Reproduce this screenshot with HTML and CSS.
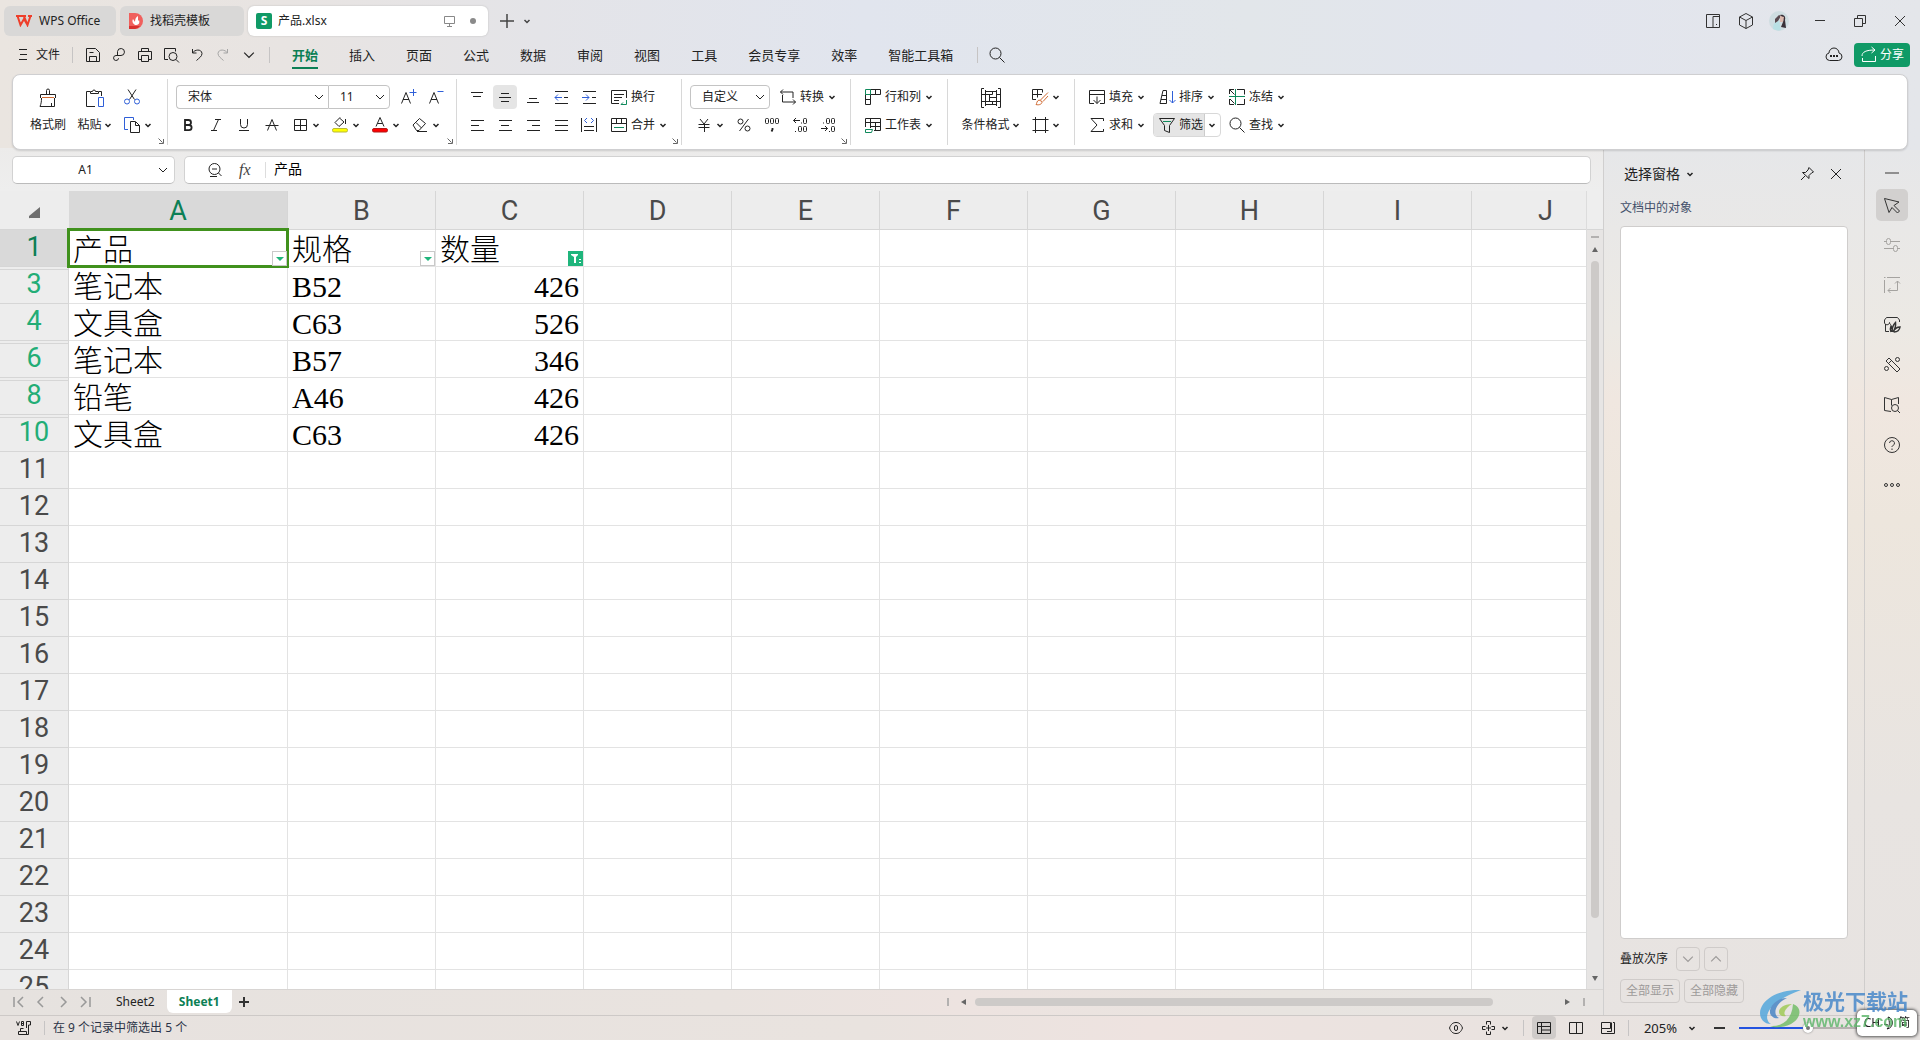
FILE: index.html
```html
<!DOCTYPE html>
<html lang="zh-CN">
<head>
<meta charset="utf-8">
<title>产品.xlsx - WPS Office</title>
<link rel="stylesheet" href="styles.css">
</head>
<body>
<svg class="sprite" aria-hidden="true">
  <symbol id="chev" viewBox="0 0 10 10"><path d="M2.500 4l2.500 2.500L7.500 4" stroke-width="1.500"/></symbol>
  <symbol id="chev-l" viewBox="0 0 10 10"><path d="M1 3l4 4 4-4"/></symbol>
  <symbol id="launch" viewBox="0 0 8 8"><path d="M1.500 1.500l4 4M2 6.500h4.500V2"/></symbol>
  <symbol id="x" viewBox="0 0 12 12"><path d="M1 1l10 10M11 1L1 11"/></symbol>
  <symbol id="menu" viewBox="0 0 18 18"><path d="M5 3.500h8M6 8.500h7M5 13.500h8"/></symbol>
  <symbol id="save" viewBox="0 0 18 18"><path d="M2.500 2.500h9l4 4v9h-13zM5.500 15.500v-5h7v5M5.500 6.500h4"/></symbol>
  <symbol id="link" viewBox="0 0 18 18"><path d="M7.500 10V5.500a3.500 3.500 0 1 1 3.500 4H6a2.500 2.500 0 1 0 2.500 3V12"/></symbol>
  <symbol id="print" viewBox="0 0 18 18"><path d="M5.500 5.500v-3h7v3M5.500 13.500h-3v-8h13v8h-3M5.500 9.500h7v6h-7z"/></symbol>
  <symbol id="preview" viewBox="0 0 18 18"><path d="M6 13.500H2.500v-11h11v3"/><circle cx="11" cy="10.500" r="4"/><path d="M14 13.500l3 3"/></symbol>
  <symbol id="undo" viewBox="0 0 18 18"><path d="M4.500 3v4h4M4.500 7c2-3.500 9-4.500 9.500.500 0 3-3 4.500-5.500 7"/></symbol>
  <symbol id="redo" viewBox="0 0 18 18"><path d="M13.500 3v4h-4M13.500 7C11.500 3.500 4.500 2.500 4 7.500c0 3 3 4.500 5.500 7"/></symbol>
  <symbol id="search" viewBox="0 0 18 18"><circle cx="7.500" cy="7.500" r="5.500"/><path d="M11.500 11.500l5 5"/></symbol>
  <symbol id="brush" viewBox="0 0 20 20"><path d="M8.500 7V2.500a1.500 1.500 0 0 1 3 0V7M2.500 10V6.500h15V10M3.500 10c0 4-.5 6-1.500 8.500h14.500V10M13.500 15v3.500"/><path class="or" d="M4 9.500h12"/></symbol>
  <symbol id="paste" viewBox="0 0 20 20"><path d="M5 3.500H1.500v15H10M14 3.500h2.500V8M5.500 5.500v-2h2a1.500 1.500 0 0 1 3 0h3v2z"/><path class="bl" d="M13.500 9.500h5v9h-5z"/></symbol>
  <symbol id="cut" viewBox="0 0 18 18"><path d="M5 1.500l6.500 10M13 1.500l-6.500 10"/><g class="bl"><circle cx="4" cy="13.500" r="2.500"/><circle cx="14" cy="13.500" r="2.500"/></g></symbol>
  <symbol id="copy" viewBox="0 0 18 18"><path class="bl" d="M5 13.500H1.500v-12h9V4"/><path d="M7.500 5.500h5l4 4v7h-9zM12.500 6v3.500h4"/></symbol>
  <symbol id="fontup" viewBox="0 0 18 18"><path d="M2.500 15.500l4.500-11 4.500 11M4 11.500h6"/><path class="bl" d="M10.500 4.500h7M14.500 1v7"/></symbol>
  <symbol id="fontdn" viewBox="0 0 18 18"><path d="M2.500 15.500l4.500-11 4.500 11M4 11.500h6"/><path class="bl" d="M10.500 3.500h6"/></symbol>
  <symbol id="bold" viewBox="0 0 18 18"><path stroke-width="1.800" d="M6 4h3.500a2.400 2.400 0 0 1 0 5H6zm0 5h4a2.600 2.600 0 0 1 0 5.200H6z"/></symbol>
  <symbol id="ital" viewBox="0 0 18 18"><path d="M8 3.500h6M4 14.500h6M11.500 3.500l-5 11"/></symbol>
  <symbol id="under" viewBox="0 0 18 18"><path d="M5.500 3v5.500a3.500 3.500 0 0 0 7 0V3M4 14.500h10"/></symbol>
  <symbol id="strike" viewBox="0 0 18 18"><path d="M4.500 14.500L9 3.500l4.500 11M2.500 9.500h13"/></symbol>
  <symbol id="border" viewBox="0 0 18 18"><path d="M3.500 3.500h12v11h-12zM9.500 3.500v11M3.500 9.500h12"/></symbol>
  <symbol id="fill" viewBox="0 0 18 18"><path d="M9 1.500L4 6.500l4 4 5-4.500-4.500-4M14.500 3v5"/><rect class="hl" x="1.500" y="12.500" width="15" height="3.500" rx="1.500"/></symbol>
  <symbol id="color" viewBox="0 0 18 18"><path d="M5 10.500l4-9 4 9M6.500 7.500h5"/><rect class="red" x="1.500" y="12.500" width="15" height="3.500" rx="1.500"/></symbol>
  <symbol id="erase" viewBox="0 0 18 18"><path d="M2 9l6.500-6.500 6 5-6.500 7H5.500zM5 6.500l5.500 5.500M6 15.500h10"/></symbol>
  <symbol id="atop" viewBox="0 0 18 18"><path d="M3 4.500h12M5 8.500h8"/></symbol>
  <symbol id="amid" viewBox="0 0 18 18"><path d="M5 5.500h8M3 9.500h12M5 13.500h8"/></symbol>
  <symbol id="abot" viewBox="0 0 18 18"><path d="M5 10.500h8M3 14.500h12"/></symbol>
  <symbol id="outd" viewBox="0 0 18 18"><path d="M3 3.500h13M12 9.500h4M3 15.500h13"/><path class="bl" d="M10 9.500H3M6 6.500l-3 3 3 3"/></symbol>
  <symbol id="ind" viewBox="0 0 18 18"><path d="M3 3.500h13M12 9.500h4M3 15.500h13"/><path class="bl" d="M2 9.500h7M6 6.500l3 3-3 3"/></symbol>
  <symbol id="wrap" viewBox="0 0 18 18"><path d="M9 15.500H1.500v-13h15V10M4 6.500h10M4 9.500h8M4 12.500h5"/><path class="gr" d="M16.500 12v4.500H11M13 14.500l-2 2"/></symbol>
  <symbol id="al" viewBox="0 0 18 18"><path d="M3 4.500h13M3 9.500h8M3 14.500h13"/></symbol>
  <symbol id="ac" viewBox="0 0 18 18"><path d="M3 4.500h13M5 9.500h8M3 14.500h13"/></symbol>
  <symbol id="ar" viewBox="0 0 18 18"><path d="M3 4.500h13M8 9.500h8M3 14.500h13"/></symbol>
  <symbol id="aj" viewBox="0 0 18 18"><path d="M3 4.500h13M3 9.500h13M3 14.500h13"/></symbol>
  <symbol id="dist" viewBox="0 0 18 18"><path d="M1.500 2v14M16.500 2v14M4 10.500h10M4 14.500h10"/><path class="bl" d="M7 2L4.500 4.500 7 7M11 2l2.500 2.500L11 7"/></symbol>
  <symbol id="merge" viewBox="0 0 18 18"><path d="M1.500 2.500h15v13h-15zM1.500 7.500h15M6.500 2.500v5M11.500 2.500v5"/><path class="gr" d="M4 11.500h10"/></symbol>
  <symbol id="conv" viewBox="0 0 18 18"><path d="M4 1.500L1.500 4 4 6.500M1.500 4H14v6M14 16.500l2.500-2.500L14 11.500M16.500 14H3.500V7"/></symbol>
  <symbol id="yen" viewBox="0 0 18 18"><path d="M5 3l4 5 4-5M3.500 8.500h11M3.500 11.500h11M9.500 8v8"/></symbol>
  <symbol id="pct" viewBox="0 0 18 18"><circle cx="5.500" cy="5.500" r="2.500"/><circle cx="12.500" cy="12.500" r="2.500"/><path d="M13.500 3l-9 12"/></symbol>
  <symbol id="thou" viewBox="0 0 18 18"><rect x="2.500" y="2.500" width="3" height="5" rx="1"/><rect x="7.500" y="2.500" width="3" height="5" rx="1"/><rect x="12.500" y="2.500" width="3" height="5" rx="1"/><path stroke-width="1.800" d="M9.500 12v1.500L8.500 15.500"/></symbol>
  <symbol id="decl" viewBox="0 0 18 18"><path d="M9 4.500H2.500M5 2L2.500 4.500 5 7M10.500 6.500v1M4.500 15v1"/><rect x="12.500" y="2.500" width="3" height="5" rx="1"/><rect x="7.500" y="10.500" width="3" height="5" rx="1"/><rect x="12.500" y="10.500" width="3" height="5" rx="1"/></symbol>
  <symbol id="decr" viewBox="0 0 18 18"><path d="M2 12.500h6.500M6 10l2.500 2.500L6 15M4.500 6.500v1M10.500 15v1"/><rect x="7.500" y="2.500" width="3" height="5" rx="1"/><rect x="12.500" y="2.500" width="3" height="5" rx="1"/><rect x="12.500" y="10.500" width="3" height="5" rx="1"/></symbol>
  <symbol id="rowcol" viewBox="0 0 18 18"><path d="M6.500 6.500h10v-5h-10zM11.500 1.500v5M1.500 6.500h5v10h-5zM1.500 11.500h5"/><path class="gr" d="M1.500 1.500h5v5h-5z"/></symbol>
  <symbol id="wsheet" viewBox="0 0 18 18"><path d="M1.500 11V2.500h15v12H10M1.500 6.500h15M6.500 2.500V12M6.500 10.500h10M11.500 6.500v8"/><path class="gr" d="M1.500 13.500h7l-1 3h-6z"/></symbol>
  <symbol id="cond" viewBox="0 0 20 20"><path d="M3 .5H.5v19H3M17 .5h2.500v19H17M4.500 2v16M15.500 2v16M.5 6.500h4M.5 13.500h4M15.500 6.500h4M15.500 13.500h4M4.500 3.500h11M4.500 6.500h7v-3M8.500 6.500v7M8.500 9.500h7M4.500 13.500h11M4.500 16.500h11M11.500 13.500v3"/></symbol>
  <symbol id="tstyle" viewBox="0 0 18 18"><path d="M11 6.500H1.500M1.500 1.500h10v3M1.500 1.500v10H5M6.500 1.500v8"/><path class="or" d="M17 4.500L9.500 12M17 8l-5 5.500M5 16.500c1-1 .5-3.500 3-4.500l3 1.500c.5 2.500-3 4-6 3z"/></symbol>
  <symbol id="frame" viewBox="0 0 18 18"><path d="M4.500 1v16M14.500 1v16M1.500 3.500h16M1.500 14.500h16"/></symbol>
  <symbol id="fillin" viewBox="0 0 18 18"><path d="M6 15.500H1.500v-13h15v13H12M1.500 6.500h15M9 8.500v7M5.500 12L9 15.500l3.500-3.500"/></symbol>
  <symbol id="sort" viewBox="0 0 18 18"><path d="M2 15.500l3-13h3.500v13zM4 7.500h4.500M3 11.500h5.500"/><path class="bl" d="M14.500 3v12M11.500 12l3 3 3-3"/></symbol>
  <symbol id="freeze" viewBox="0 0 18 18"><path d="M6 1.500H1.500V6M1.500 1.500l5 5M9 1.500h7.500v5M1.500 11v5.500H6M2 11l4.500 4.500M9 16.500h7.500V11"/><path class="gr" d="M7.500 1v16M1 8.500h16"/></symbol>
  <symbol id="sum" viewBox="0 0 18 18"><path d="M15.500 5V2.500H3l6 6.500-6 6.500h12.500V13"/></symbol>
  <symbol id="funnel" viewBox="0 0 18 18"><path d="M1.500 2.500h15l-5 7v7l-5-2v-5z"/><path class="gr" d="M5 5.500h8"/></symbol>
  <symbol id="panel" viewBox="0 0 18 18"><path d="M9 15.500H2.500v-13h13v13H9v-11h6.500M12 12.500h1"/></symbol>
  <symbol id="cube" viewBox="0 0 18 18"><path d="M9 1.500L15.500 5v8L9 16.500 2.500 13V5zM2.500 5L9 8.500 15.500 5M9 8.500v8"/></symbol>
  <symbol id="restore" viewBox="0 0 18 18"><path d="M3.500 6.500h8v8h-8zM6.500 6.500v-3h8v8h-3"/></symbol>
  <symbol id="cloud" viewBox="0 0 18 18"><path d="M4.500 14.500a3.800 3.800 0 0 1-.5-7.500 5 5 0 0 1 10 0 3.800 3.800 0 0 1-.5 7.500z"/><path stroke-width="2" d="M5 10h2M8 10h2M11 10h2"/></symbol>
  <symbol id="share" viewBox="0 0 18 18"><path d="M2 10c0-4 4-6 13-6M11.500 1L15 4l-3.500 3M2.500 12v3.500h13V10"/></symbol>
  <symbol id="screen" viewBox="0 0 14 14"><path d="M2.500 2.500h10v7h-10zM5 12.500h5M7.500 10v2"/></symbol>
  <symbol id="plus" viewBox="0 0 14 14"><path stroke-width="1.500" d="M0 7h14M7 0v14"/></symbol>
  <symbol id="zoomout" viewBox="0 0 18 18"><circle cx="8.500" cy="8" r="5.500"/><path d="M6 8h5M12.500 12l3 3M4 15.500h7"/></symbol>
  <symbol id="pin" viewBox="0 0 18 18"><path d="M11 2.500l4.500 4.500-2 1-2.500 2.500v3L4.500 7.500h3L10 5zM7 11l-4 4"/></symbol>
  <symbol id="cursor" viewBox="0 0 18 18"><path d="M1.500 2.500l14.500 3.500-5 3.500 5.500 5.500-2 2L9 11.500l-3 5z"/></symbol>
  <symbol id="adjust" viewBox="0 0 18 18"><path d="M1 5.500h2.500M8 5.500h9M1 12.500h9M15 12.500h2"/><rect x="3.500" y="2.500" width="4" height="6" rx="2"/><rect x="10.500" y="9.500" width="4" height="6" rx="2"/></symbol>
  <symbol id="trans" viewBox="0 0 18 18"><path d="M4 1.500h13M1.500 4v13M1 1.500h1.500M14.500 5v9.500H5M12 7.500L14.500 5 17 7.500M7.500 12L5 14.500 7.500 17"/></symbol>
  <symbol id="store" viewBox="0 0 18 18"><path d="M2.500 8v7.500H6M1.500 7V4l2-2.500h11l2 2.500v2M1.500 6.500c0 3 5 3 5 0 0 1 .5 2 1.500 2"/><path stroke-width="1.500" d="M8 16c-1-3-1-4 0-6 2 3 1 4 1 6 0-4 1-7 3.500-9.500.5 4-.5 7-2.500 9.500 2-4 4-5 7-5-.5 3-2.500 5-6 5"/></symbol>
  <symbol id="tools" viewBox="0 0 18 18"><path d="M3 5l3-3 11 11-3 3zM8.500 4.500l-3 3"/><circle cx="14.500" cy="3.500" r="2"/><circle cx="3.500" cy="12.500" r="2"/></symbol>
  <symbol id="book" viewBox="0 0 18 18"><path d="M8 15.500l-6.500-1v-13l7 2 7-2V8M8.500 3.500v6"/><circle cx="12" cy="12" r="3.500"/><path d="M14.500 14.500l2.500 2.500"/></symbol>
  <symbol id="help" viewBox="0 0 18 18"><circle cx="9" cy="9" r="7.500"/><path d="M6.500 7a2.500 2.500 0 1 1 3.500 2.500c-1 .5-1 1-1 1.500M9 12.500v1.500"/></symbol>
  <symbol id="more" viewBox="0 0 18 18"><circle cx="3" cy="9" r="1.500"/><circle cx="9" cy="9" r="1.500"/><circle cx="15" cy="9" r="1.500"/></symbol>
  <symbol id="macro" viewBox="0 0 18 18"><path d="M1.500 2.500l1.500 4 1.500-4M6.500 2.500h2v4h-2zM6.500 4.500h2M11.500 9V2.500h4V6h-2v9.500h-10v-3h8v3M5.500 12.500v-3h3"/></symbol>
  <symbol id="eye" viewBox="0 0 18 18"><path d="M2.500 9C4 5 6 3.500 9 3.500S14 5 15.500 9C14 13 12 14.500 9 14.500S4 13 2.500 9z"/><rect x="7.500" y="6.500" width="3" height="5" rx="1.500"/></symbol>
  <symbol id="focus" viewBox="0 0 18 18"><path d="M6.500 5.500v-3h4v3M6.500 12.500v3h4v-3M5.500 7.500h-3v3h3M11.500 7.500h3v3h-3M8.500 6v6M6 9h5"/></symbol>
  <symbol id="vgrid" viewBox="0 0 18 18"><path d="M2.500 3.500h13v11h-13zM2.500 7.500h13M6.500 3.500v11M6.500 11h9"/></symbol>
  <symbol id="vsplit" viewBox="0 0 18 18"><path d="M2.500 3.500h13v11h-13zM9.500 3.500v11"/></symbol>
  <symbol id="vread" viewBox="0 0 18 18"><path d="M2.500 3.500h9v6h-9zM2.500 9.500v5h13v-11M14 3.500h1.500M8 12.500h4.500v-9"/></symbol>
</svg>

<header class="titlebar">
  <nav class="doctabs" aria-label="文档标签">
    <button class="doctab home"><svg width="16" height="12" viewBox="0 0 16 12"><path fill="none" stroke="#ee3f2b" stroke-width="2" d="M0 1h10M14.500 1l-3 9L8 1.500M1.500 1l3 9L8 4l3.500 6M12 1h4"/></svg>WPS Office</button>
    <button class="doctab store"><svg width="14" height="16" viewBox="0 0 14 16"><path fill="#f0605d" d="M0 0h6a8 8 0 0 1 0 16H0z"/><path fill="#d8312f" d="M0 13h11a8 8 0 0 1-5 3H0z"/><path fill="#fff" d="M6 12C3 10 3 8 4 6l2 3c0-3 1-5 3-6v5l1-1c1 3 0 5-4 5z"/></svg>找稻壳模板</button>
    <button class="doctab active"><span class="s-logo">S</span><span class="name">产品.xlsx</span><svg class="ic14 dim"><use href="#screen"/></svg><i class="dot"></i></button>
  </nav>
  <button class="ghost" aria-label="新建"><svg class="ic14"><use href="#plus"/></svg></button>
  <button class="ghost narrow" aria-label="标签列表"><svg class="ch"><use href="#chev"/></svg></button>
  <div class="winctl">
    <button aria-label="侧栏"><svg class="ic"><use href="#panel"/></svg></button>
    <button aria-label="应用"><svg class="ic"><use href="#cube"/></svg></button>
    <button class="user" aria-label="账户"><svg width="20" height="20" viewBox="0 0 20 20"><circle cx="10" cy="10" r="10" fill="#cfdde1"/><path fill="#b9e0e4" d="M4 18c0-5 2-8 6-8l2 9c-3 1-6 0-8-1z"/><path fill="#5b4a50" d="M6 8l4-4 2 1-3 5-3 2z"/><path fill="#3a3038" d="M11 4c4-1 6 2 5 5l1 8-5-1 2-5c1-3 0-4-3-7z"/><path fill="#dcb9ae" d="M11 5l4 1-1 5-3 0z"/></svg></button>
    <button class="sys" aria-label="最小化"><svg class="ic"><path d="M4 8.500h10"/></svg></button>
    <button class="sys" aria-label="还原"><svg class="ic"><use href="#restore"/></svg></button>
    <button class="sys" aria-label="关闭"><svg class="ic12"><use href="#x"/></svg></button>
  </div>
</header>

<nav class="menubar">
  <button class="file"><svg class="ic"><use href="#menu"/></svg>文件</button>
  <i class="vsep"></i>
  <div class="quick">
    <button aria-label="保存"><svg class="ic"><use href="#save"/></svg></button>
    <button aria-label="输出"><svg class="ic"><use href="#link"/></svg></button>
    <button aria-label="打印"><svg class="ic"><use href="#print"/></svg></button>
    <button aria-label="打印预览"><svg class="ic"><use href="#preview"/></svg></button>
    <button aria-label="撤销"><svg class="ic"><use href="#undo"/></svg></button>
    <button aria-label="恢复" class="faint"><svg class="ic"><use href="#redo"/></svg></button>
    <button aria-label="更多"><svg class="ch12"><use href="#chev-l"/></svg></button>
  </div>
  <i class="vsep"></i>
  <div class="menus">
    <a class="on" href="#start">开始</a><a href="#insert">插入</a><a href="#page">页面</a><a href="#formula">公式</a><a href="#data">数据</a><a href="#review">审阅</a><a href="#view">视图</a><a href="#tool">工具</a><a href="#vip">会员专享</a><a href="#eff">效率</a><a href="#smart">智能工具箱</a>
  </div>
  <i class="vsep"></i>
  <button class="find" aria-label="搜索"><svg class="ic"><use href="#search"/></svg></button>
  <div class="right">
    <button aria-label="云同步"><svg class="ic"><use href="#cloud"/></svg></button>
    <button class="sharebtn"><svg class="ic"><use href="#share"/></svg>分享</button>
  </div>
</nav>

<section class="ribbon" aria-label="开始">
  <div class="group clip">
    <button class="big"><svg class="ic20"><use href="#brush"/></svg><span>格式刷</span></button>
    <button class="big paste"><svg class="ic20"><use href="#paste"/></svg><span>粘贴<svg class="ch"><use href="#chev"/></svg></span></button>
    <div class="rows">
      <div class="row"><button class="split flat" aria-label="剪切"><svg class="ic"><use href="#cut"/></svg></button></div>
      <div class="row"><button class="split flat" aria-label="复制"><svg class="ic"><use href="#copy"/></svg><svg class="ch"><use href="#chev"/></svg></button></div>
    </div>
    <svg class="launch"><use href="#launch"/></svg>
  </div>
  <div class="group font">
    <div class="rows">
      <div class="row selrow">
        <span class="sel name"><select aria-label="字体"><option>宋体</option></select><svg class="ch"><use href="#chev-l"/></svg></span>
        <span class="sel size"><select aria-label="字号"><option>11</option></select><svg class="ch"><use href="#chev-l"/></svg></span>
        <button class="tb" aria-label="增大字号"><svg class="ic"><use href="#fontup"/></svg></button>
        <button class="tb" aria-label="减小字号"><svg class="ic"><use href="#fontdn"/></svg></button>
      </div>
      <div class="row">
        <button class="tb" aria-label="加粗"><svg class="ic"><use href="#bold"/></svg></button>
        <button class="tb" aria-label="倾斜"><svg class="ic"><use href="#ital"/></svg></button>
        <button class="tb" aria-label="下划线"><svg class="ic"><use href="#under"/></svg></button>
        <button class="tb" aria-label="删除线"><svg class="ic"><use href="#strike"/></svg></button>
        <button class="split" aria-label="边框"><svg class="ic"><use href="#border"/></svg><svg class="ch"><use href="#chev"/></svg></button>
        <button class="split" aria-label="填充颜色"><svg class="ic"><use href="#fill"/></svg><svg class="ch"><use href="#chev"/></svg></button>
        <button class="split" aria-label="字体颜色"><svg class="ic"><use href="#color"/></svg><svg class="ch"><use href="#chev"/></svg></button>
        <button class="split" aria-label="清除"><svg class="ic"><use href="#erase"/></svg><svg class="ch"><use href="#chev"/></svg></button>
      </div>
    </div>
    <svg class="launch"><use href="#launch"/></svg>
  </div>
  <div class="group align">
    <div class="rows">
      <div class="row">
        <button class="tb" aria-label="顶端对齐"><svg class="ic"><use href="#atop"/></svg></button>
        <button class="tb pressed" aria-label="垂直居中"><svg class="ic"><use href="#amid"/></svg></button>
        <button class="tb" aria-label="底端对齐"><svg class="ic"><use href="#abot"/></svg></button>
        <button class="tb" aria-label="减少缩进"><svg class="ic"><use href="#outd"/></svg></button>
        <button class="tb" aria-label="增加缩进"><svg class="ic"><use href="#ind"/></svg></button>
        <button class="lab"><svg class="ic"><use href="#wrap"/></svg>换行</button>
      </div>
      <div class="row">
        <button class="tb" aria-label="左对齐"><svg class="ic"><use href="#al"/></svg></button>
        <button class="tb" aria-label="居中"><svg class="ic"><use href="#ac"/></svg></button>
        <button class="tb" aria-label="右对齐"><svg class="ic"><use href="#ar"/></svg></button>
        <button class="tb" aria-label="两端对齐"><svg class="ic"><use href="#aj"/></svg></button>
        <button class="tb" aria-label="分散对齐"><svg class="ic"><use href="#dist"/></svg></button>
        <button class="lab"><svg class="ic"><use href="#merge"/></svg>合并<svg class="ch"><use href="#chev"/></svg></button>
      </div>
    </div>
    <svg class="launch"><use href="#launch"/></svg>
  </div>
  <div class="group number">
    <div class="rows">
      <div class="row selrow2">
        <span class="sel fmt"><select aria-label="数字格式"><option>自定义</option></select><svg class="ch"><use href="#chev-l"/></svg></span>
        <button class="lab"><svg class="ic"><use href="#conv"/></svg>转换<svg class="ch"><use href="#chev"/></svg></button>
      </div>
      <div class="row">
        <button class="split" aria-label="货币"><svg class="ic"><use href="#yen"/></svg><svg class="ch"><use href="#chev"/></svg></button>
        <button class="tb" aria-label="百分比"><svg class="ic"><use href="#pct"/></svg></button>
        <button class="tb" aria-label="千位分隔"><svg class="ic"><use href="#thou"/></svg></button>
        <button class="tb" aria-label="增加小数位"><svg class="ic"><use href="#decl"/></svg></button>
        <button class="tb" aria-label="减少小数位"><svg class="ic"><use href="#decr"/></svg></button>
      </div>
    </div>
    <svg class="launch"><use href="#launch"/></svg>
  </div>
  <div class="group cells">
    <div class="rows">
      <div class="row"><button class="lab"><svg class="ic"><use href="#rowcol"/></svg>行和列<svg class="ch"><use href="#chev"/></svg></button></div>
      <div class="row"><button class="lab"><svg class="ic"><use href="#wsheet"/></svg>工作表<svg class="ch"><use href="#chev"/></svg></button></div>
    </div>
  </div>
  <div class="group style">
    <button class="big cond"><svg class="ic20"><use href="#cond"/></svg><span>条件格式<svg class="ch"><use href="#chev"/></svg></span></button>
    <div class="rows">
      <div class="row"><button class="split" aria-label="表格样式"><svg class="ic"><use href="#tstyle"/></svg><svg class="ch"><use href="#chev"/></svg></button></div>
      <div class="row"><button class="split" aria-label="单元格样式"><svg class="ic"><use href="#frame"/></svg><svg class="ch"><use href="#chev"/></svg></button></div>
    </div>
  </div>
  <div class="group edit">
    <button class="lab"><svg class="ic"><use href="#fillin"/></svg>填充<svg class="ch"><use href="#chev"/></svg></button>
    <button class="lab"><svg class="ic"><use href="#sort"/></svg>排序<svg class="ch"><use href="#chev"/></svg></button>
    <button class="lab"><svg class="ic"><use href="#freeze"/></svg>冻结<svg class="ch"><use href="#chev"/></svg></button>
    <button class="lab"><svg class="ic"><use href="#sum"/></svg>求和<svg class="ch"><use href="#chev"/></svg></button>
    <button class="lab filter"><span><svg class="ic"><use href="#funnel"/></svg>筛选</span><svg class="ch"><use href="#chev"/></svg></button>
    <button class="lab"><svg class="ic"><use href="#search"/></svg>查找<svg class="ch"><use href="#chev"/></svg></button>
  </div>
</section>

<main class="workspace">
  <section class="book">
    <div class="formula">
      <div class="namebox"><input aria-label="名称框" value="A1"><svg class="ch"><use href="#chev-l"/></svg></div>
      <div class="fx"><svg class="ic"><use href="#zoomout"/></svg><span class="fxi"><i>f</i><b>x</b></span><input aria-label="编辑栏" value="产品"></div>
    </div>
    <div class="sheet">
      <div class="cells-view">
        <table>
          <colgroup><col class="c-h"><col class="c-a"><col span="9" class="c-n"></colgroup>
          <thead><tr><th class="corner"><svg width="12" height="13"><path d="M11 1v11H1a1 1 0 0 1-1-2z"/></svg><th class="sel-h">A<th>B<th>C<th>D<th>E<th>F<th>G<th>H<th>I<th>J</tr></thead>
          <tbody>
          <tr class="hid"><th class="sel-h">1<td class="cur">产品<i class="fb"></i><td>规格<i class="fb"></i><td>数量<i class="fb on"><svg viewBox="0 0 15 15"><path d="M3 3h7v1L8 6v6H6V6L3 4zM11 8h2v1h-2zM11 11h2v1h-2z"/></svg></i><td><td><td><td><td><td><td></tr>
          <tr><th class="flt">3<td>笔记本<td>B52<td class="n">426<td><td><td><td><td><td><td></tr>
          <tr class="hid"><th class="flt">4<td>文具盒<td>C63<td class="n">526<td><td><td><td><td><td><td></tr>
          <tr class="hid"><th class="flt">6<td>笔记本<td>B57<td class="n">346<td><td><td><td><td><td><td></tr>
          <tr class="hid"><th class="flt">8<td>铅笔<td>A46<td class="n">426<td><td><td><td><td><td><td></tr>
          <tr><th class="flt">10<td>文具盒<td>C63<td class="n">426<td><td><td><td><td><td><td></tr>
          <tr><th>11<td><td><td><td><td><td><td><td><td><td></tr>
          <tr><th>12<td><td><td><td><td><td><td><td><td><td></tr>
          <tr><th>13<td><td><td><td><td><td><td><td><td><td></tr>
          <tr><th>14<td><td><td><td><td><td><td><td><td><td></tr>
          <tr><th>15<td><td><td><td><td><td><td><td><td><td></tr>
          <tr><th>16<td><td><td><td><td><td><td><td><td><td></tr>
          <tr><th>17<td><td><td><td><td><td><td><td><td><td></tr>
          <tr><th>18<td><td><td><td><td><td><td><td><td><td></tr>
          <tr><th>19<td><td><td><td><td><td><td><td><td><td></tr>
          <tr><th>20<td><td><td><td><td><td><td><td><td><td></tr>
          <tr><th>21<td><td><td><td><td><td><td><td><td><td></tr>
          <tr><th>22<td><td><td><td><td><td><td><td><td><td></tr>
          <tr><th>23<td><td><td><td><td><td><td><td><td><td></tr>
          <tr><th>24<td><td><td><td><td><td><td><td><td><td></tr>
          <tr><th>25<td><td><td><td><td><td><td><td><td><td></tr>
          </tbody>
        </table>
      </div>
      <div class="vbar"><div class="vhead"></div><i class="tick"></i><i class="up"></i><i class="thumb"></i><i class="down"></i></div>
    </div>
    <div class="tabsbar">
      <div class="nav">
        <svg class="ic14"><path d="M2 2v10M11 2L6 7l5 5"/></svg><svg class="ic14"><path d="M9 2L4 7l5 5"/></svg><svg class="ic14"><path d="M5 2l5 5-5 5"/></svg><svg class="ic14"><path d="M12 2v10M3 2l5 5-5 5"/></svg>
      </div>
      <button class="stab">Sheet2</button><button class="stab on">Sheet1</button>
      <button class="add" aria-label="新建工作表"><svg width="10" height="10"><path d="M0 5h10M5 0v10"/></svg></button>
      <div class="hbar"><i class="tick"></i><i class="left"></i><span class="track"><i class="thumb"></i></span><i class="rt"></i><i class="tick"></i></div>
    </div>
  </section>

  <aside class="pane">
    <div class="phead"><h2>选择窗格</h2><svg class="ch"><use href="#chev"/></svg><button class="pinb" aria-label="固定"><svg class="ic"><use href="#pin"/></svg></button><button aria-label="关闭窗格"><svg class="ic12"><use href="#x"/></svg></button></div>
    <p class="plabel">文档中的对象</p>
    <div class="plist"></div>
    <div class="order"><span>叠放次序</span><button disabled aria-label="下移"><svg class="ch12"><use href="#chev-l"/></svg></button><button disabled aria-label="上移"><svg class="ch12 flip"><use href="#chev-l"/></svg></button></div>
    <div class="showall"><button disabled>全部显示</button><button disabled>全部隐藏</button></div>
  </aside>

  <nav class="side" aria-label="侧边栏">
    <i class="bar"></i>
    <button class="on" aria-label="选择"><svg class="ic"><use href="#cursor"/></svg></button>
    <button class="faint" aria-label="属性"><svg class="ic"><use href="#adjust"/></svg></button>
    <button class="faint" aria-label="转换"><svg class="ic"><use href="#trans"/></svg></button>
    <button aria-label="稻壳"><svg class="ic"><use href="#store"/></svg></button>
    <button aria-label="工具"><svg class="ic"><use href="#tools"/></svg></button>
    <button aria-label="学习"><svg class="ic"><use href="#book"/></svg></button>
    <button aria-label="帮助"><svg class="ic"><use href="#help"/></svg></button>
    <button aria-label="更多"><svg class="ic"><use href="#more"/></svg></button>
  </nav>
</main>

<footer class="status">
  <svg class="ic"><use href="#macro"/></svg><i class="vsep"></i><span class="msg">在 9 个记录中筛选出 5 个</span>
  <div class="views">
    <button aria-label="护眼"><svg class="ic"><use href="#eye"/></svg></button>
    <button class="wide" aria-label="聚光灯"><svg class="ic"><use href="#focus"/></svg><svg class="ch"><use href="#chev"/></svg></button>
    <i class="vsep"></i>
    <button class="on" aria-label="普通视图"><svg class="ic"><use href="#vgrid"/></svg></button>
    <button aria-label="分页预览"><svg class="ic"><use href="#vsplit"/></svg></button>
    <button aria-label="阅读"><svg class="ic"><use href="#vread"/></svg></button>
    <i class="vsep"></i>
    <button class="pct">205%<svg class="ch"><use href="#chev"/></svg></button>
    <button class="minus" aria-label="缩小"><i></i></button>
    <input type="range" min="0" max="100" value="49" aria-label="缩放">
  </div>
</footer>

<div class="ime">CH <svg width="12" height="14"><path d="M5 1c6 1 6 11-1 12 3-3 3-7 1-12zM1 8l4 1"/></svg> 简</div>
<div class="mark">
  <svg width="44" height="40" viewBox="0 0 44 40"><path fill="#4aa3dc" d="M42 1C20 0 2 10 1 24c0 6 4 11 11 11C4 30 6 14 42 1z"/><path fill="#3f7fc4" d="M28 9c-10 0-18 8-17 15 1 4 5 6 9 5-6-3-5-14 8-20z"/><path fill="#6dbb62" d="M34 15c9 3 9 14-2 20-8 4-16 4-21 2 12 1 22-6 23-22z"/><path fill="#9cc94e" d="M33 15c-8 0-13 4-13 8 0 3 3 5 7 4-3-2-2-7 6-12z"/></svg>
  <div><strong>极光下载站</strong><span>www.xz7.com</span></div>
</div>
</body>
</html>
```

FILE: styles.css
```css
* { box-sizing: border-box; }
body {
  margin: 0;
  height: 100vh;
  display: flex;
  flex-direction: column;
  overflow: hidden;
  font: 12px/16px "Noto Sans", "Noto Sans CJK SC", sans-serif;
  color: #222;
  background:
    linear-gradient(90deg, #eae5e0 0, #e8e4e2 15%, #e4e4e8 28%, #e1e5ee 45%, #e2e6ea 65%, #e2e5ee 80%, #e4e6ea 100%) top / 100% 150px no-repeat,
    linear-gradient(180deg, #e6e7e9 150px, #e9e8e7 230px, #ece9e4 330px, #f0e7e0 400px, #ede6dd 520px, #e8e4e1 800px, #e7e3e1 100%);
}
button, input, select { font: inherit; color: inherit; margin: 0; padding: 0; border: 0; background: none; }
button { display: flex; align-items: center; justify-content: center; white-space: nowrap; }
a { color: inherit; text-decoration: none; }
svg { flex: none; display: block; }
.sprite { position: absolute; width: 0; height: 0; }
.ic, .ic12, .ic14, .ic20, .ch, .ch12, .launch { fill: none; stroke: currentColor; stroke-width: 1; }
.ic { width: 18px; height: 18px; }
.ic20 { width: 20px; height: 20px; }
.ic14 { width: 14px; height: 14px; }
.ic12 { width: 12px; height: 12px; }
.ch { width: 10px; height: 10px; }
.ch12 { width: 12px; height: 12px; }
.flip { transform: scaleY(-1); }
.bl { stroke: #2f5fd8; }
.gr { stroke: #108a5c; }
.or { stroke: #d06a32; }
.hl { fill: #ffff00; stroke: #b9b93a; }
.red { fill: #f00; stroke: #b01818; }
.faint { color: #a5a5a5; }
.dim { color: #888; }
.vsep { width: 1px; height: 16px; background: #c6c4c4; flex: none; }

/* title bar */
.titlebar { height: 40px; display: flex; align-items: center; padding: 2px 0 0 4px; }
.doctabs { display: flex; gap: 4px; }
.doctab { height: 30px; border-radius: 6px; background: #d9d8d7; justify-content: flex-start; padding: 0 12px; gap: 7px; }
.doctab.home { width: 112px; }
.doctab.store { width: 124px; padding: 0 9px; }
.doctab.active { width: 240px; background: #fff; padding: 0 12px 0 8px; gap: 6px; box-shadow: 0 0 2px #bbb; }
.doctab .name { flex: 1; text-align: left; }
.doctab .dim { margin-right: 8px; }
.s-logo { width: 16px; height: 16px; border-radius: 2px; background: #109a66; color: #fff; font-weight: 700; text-align: center; }
.dot { width: 6px; height: 6px; border-radius: 50%; background: #8a8a8a; }
.ghost { width: 38px; height: 30px; color: #444; }
.ghost.narrow { width: 10px; margin-left: -4px; }
.winctl { margin-left: auto; display: flex; align-items: center; color: #333; }
.winctl button { width: 33px; height: 30px; }
.winctl .user { margin-right: 5px; }
.winctl .sys { width: 40px; }

/* menu bar */
.menubar { height: 34px; display: flex; align-items: center; padding: 0 10px 4px 14px; }
.menubar .file { gap: 4px; margin-right: 12px; }
.quick { display: flex; margin: 0 7px; }
.quick button { width: 26px; height: 24px; }
.menus { display: flex; gap: 31px; margin: 0 24px 0 22px; font-size: 13px; line-height: 20px; }
.menus a { padding: 3px 0 2px; border-bottom: 2px solid transparent; white-space: nowrap; }
.menus .on { color: #0c7f55; font-weight: 700; border-color: #0c7f55; }
.find { margin-left: 10px; }
.right { margin-left: auto; display: flex; align-items: center; gap: 11px; }
.sharebtn { height: 24px; padding: 0 6px; gap: 2px; border-radius: 4px; background: #109a66; color: #fff; }

/* ribbon */
.ribbon { position: relative; z-index: 1; flex: none; display: flex; margin: 0 12px; padding: 4px 0; height: 76px; background: #fff; border: 1px solid #cfcfd1; border-radius: 8px; box-shadow: 0 1px 2px #0002; }
.group { position: relative; display: flex; padding-top: 4px; border-right: 1px solid #d8d8d8; height: 66px; }
.group:last-child { border: 0; }
.rows { display: flex; flex-direction: column; }
.row { display: flex; align-items: center; height: 28px; }
.launch { position: absolute; right: 2px; bottom: 0; width: 8px; height: 8px; color: #666; }
.tb { width: 28px; height: 24px; }
.pressed { background: #e5e5e5; border-radius: 4px; width: 24px; margin: 0 2px; }
.split { width: 40px; height: 24px; padding-left: 5px; gap: 2px; justify-content: flex-start; }
.lab { height: 24px; padding-left: 7px; gap: 3px; justify-content: flex-start; }
.big { flex-direction: column; justify-content: flex-start; gap: 9px; width: 48px; height: 56px; padding-top: 5px; }
.big span { display: flex; align-items: center; gap: 1px; }
.big.paste { width: 46px; }
.big.cond { width: 60px; margin-right: 5px; }
.clip { padding-left: 11px; padding-right: 9px; }
.font { padding-left: 6px; padding-right: 6px; }
.align { padding-left: 6px; padding-right: 13px; }
.number { padding-left: 8px; padding-right: 8px; }
.cells { padding-left: 6px; padding-right: 13px; }
.style { padding-left: 13px; padding-right: 8px; }
.edit { padding-left: 6px; display: grid; grid-template-columns: repeat(3, 70px); grid-template-rows: 28px 28px; align-items: center; }
.filter { width: 68px; margin-left: 2px; padding: 0; border: 1px solid #d8d8d8; border-radius: 4px; gap: 2px; overflow: hidden; }
.filter span { display: flex; align-items: center; gap: 3px; height: 22px; padding: 0 1px 0 4px; background: #e5e5e5; border-right: 1px solid #ccc; }
.sel { display: grid; align-items: center; height: 24px; border: 1px solid #c4c4c4; border-radius: 4px; }
.sel > * { grid-area: 1 / 1; }
.sel .ch { justify-self: end; margin-right: 4px; pointer-events: none; }
.sel select { appearance: none; width: 100%; height: 22px; padding-left: 11px; }
.sel.name { width: 152px; border-radius: 4px 0 0 4px; border-right: 0; }
.sel.size { width: 62px; border-radius: 0 4px 4px 0; margin-right: 4px; }
.sel.fmt { width: 80px; }
.selrow { padding-left: 2px; }
.selrow2 { gap: 2px; }

/* workspace */
.workspace { flex: 1; min-height: 0; display: grid; grid-template-columns: minmax(0, 1fr) 261px 56px; grid-template-rows: minmax(0, 1fr); margin-top: -2px; }
.book { display: flex; flex-direction: column; min-height: 0; }
.formula { display: flex; gap: 9px; padding: 8px 12px 7px 12px; background: linear-gradient(#ecebea, #eee); }
.namebox, .fx { height: 28px; background: #fff; border: 1px solid #d2d2d2; border-bottom-color: #bbb; border-radius: 5px; display: flex; align-items: center; }
.namebox { width: 163px; padding-right: 6px; }
.namebox input { flex: 1; min-width: 0; text-align: center; }
.fx { flex: 1; padding-left: 21px; }
.fxi { width: 42px; padding-left: 15px; margin-right: 8px; border-right: 1px solid #ddd; font: 16px/16px "Liberation Serif", serif; color: #444; }
.fxi b { font: italic 16px/14px "Liberation Serif", serif; }
.fx input { flex: 1; font-size: 14px; color: #000; height: 24px; padding-bottom: 4px; }
.sheet { flex: 1; min-height: 0; display: flex; }
.cells-view { flex: 1; min-width: 0; overflow: hidden; background: #fff; border-right: 1px solid #dcdcdc; }
table { table-layout: fixed; width: 1620px; border-spacing: 0; }
.c-h { width: 69px; }
.c-a { width: 219px; }
.c-n { width: 148px; }
th, td { height: 37px; padding: 0; border-right: 1px solid #e3e3e3; border-bottom: 1px solid #e3e3e3; white-space: nowrap; }
th { background: #ededed; font: 27px/36px Roboto, sans-serif; color: #4a4a4a; }
thead th { height: 39px; border-color: #d6d6d6; padding-top: 2px; }
tbody th { border-right-color: #d6d6d6; border-bottom-color: #d6d6d6; line-height: 34px; padding-bottom: 2px; }
.hid + tr th { background: linear-gradient(#ededed 2px, #d6d6d6 2px, #d6d6d6 3px, #ededed 3px); }
thead .corner { border-right-color: #ededed; }
.corner svg { margin: 2px 0 0 29px; fill: #6f6f6f; }
thead .sel-h, tbody .sel-h { background: #d9d9d9; color: #0c7f55; }
.flt { color: #22ad76; }
td { position: relative; padding: 4px 4px 0 4px; font: 300 30px/32px "Liberation Serif", "Noto Sans CJK SC", serif; color: #000; }
td.n { text-align: right; }
.cur::after { content: ""; position: absolute; z-index: 1; inset: -2px; border: 3px solid #40911d; pointer-events: none; }
.fb { position: absolute; z-index: 2; right: 0; bottom: 0; width: 15px; height: 15px; background: #fff; border: 1px solid #c9c9c9; }
.fb::before { content: ""; position: absolute; left: 3px; top: 5px; border: 4px solid transparent; border-top-color: #1fb57c; border-bottom: 0; }
.fb.on { background: #1fb57c; border: 0; }
.fb.on::before { display: none; }
.fb.on svg { fill: #fff; }

.vbar { width: 16px; display: flex; flex-direction: column; align-items: center; background: #e7e5e4; }
.vhead { align-self: stretch; height: 39px; background: #eee; border-bottom: 1px solid #d6d6d6; margin-bottom: 6px; }
.vbar .tick { width: 8px; height: 2px; background: #b3b1b0; }
.up, .down { border: 3px solid transparent; }
.up { border-bottom: 5px solid #666; border-top: 0; margin: 9px 0; }
.down { border-top: 5px solid #666; border-bottom: 0; margin: 58px 0 8px; }
.vbar .thumb { flex: 1; width: 8px; border-radius: 4px; background: #cdcac8; }

.tabsbar { height: 26px; display: flex; align-items: center; padding-bottom: 2px; border-top: 1px solid #d8d5d3; background: linear-gradient(90deg, #e6e2df, #e9e3df 45%, #ede3e0 60%, #e8e4e0 80%, #e7e4e2); }
.nav { display: flex; gap: 8px; padding: 0 12px 0 12px; color: #999; }
.nav svg { stroke-width: 1.5; }
.stab { height: 23px; padding: 0 12px; }
.stab.on { width: 65px; background: #fff; color: #0c7f55; font-weight: 700; border-radius: 0 0 6px 6px; }
.add { width: 24px; }
.add svg { stroke: #333; stroke-width: 2; }
.hbar { width: 638px; margin: 0 18px 0 auto; display: flex; align-items: center; }
.hbar .tick { width: 2px; height: 8px; background: #b3b1b0; }
.left, .rt { border: 3px solid transparent; }
.left { border-right: 5px solid #666; border-left: 0; margin: 0 9px 0 12px; }
.rt { border-left: 5px solid #666; border-right: 0; margin-right: 13px; }
.track { flex: 1; display: flex; padding-right: 72px; }
.track .thumb { flex: 1; height: 8px; border-radius: 4px; background: #cdcac8; }

/* selection pane */
.pane { display: flex; flex-direction: column; border-left: 1px solid #d0cfcf; padding: 14px 16px 12px; }
.phead { display: flex; align-items: center; height: 24px; padding-left: 4px; gap: 5px; }
.phead h2 { margin: 0; font-size: 14px; line-height: 20px; font-weight: 400; }
.phead button { width: 24px; height: 24px; }
.pinb { margin-left: auto; }
.plabel { margin: 13px 0 9px; line-height: 18px; color: #44506a; }
.plist { flex: 1; background: #fff; border: 1px solid #cfcdcc; border-radius: 4px; }
.order { display: flex; align-items: center; margin-top: 8px; gap: 4px; }
.order span { margin-right: 4px; }
.pane button:disabled { height: 24px; border: 1px solid #cfcbc9; border-radius: 4px; color: #9d9a99; }
.order button { width: 24px; }
.showall { display: flex; gap: 4px; margin-top: 8px; }
.showall button { padding: 0 5px; }

/* right tool strip */
.side { display: flex; flex-direction: column; align-items: center; gap: 8px; padding: 24px 1px 0 0; border-left: 1px solid #cfcdcc; color: #333; }
.side .bar { width: 14px; height: 2px; background: #8f8f8f; margin-bottom: 7px; }
.side button { width: 32px; height: 32px; border-radius: 5px; }
.side .on { background: #d2d0cf; }
.side .faint { color: #a5a3a0; }

/* status bar */
.status { flex: none; height: 25px; display: flex; align-items: center; padding: 0 41px 1px 15px; border-top: 1px solid #cdc9c7; background: linear-gradient(90deg, #e7e2df, #e9e3df 45%, #eee3e0 60%, #e9e3e0 80%, #e7e3e1); }
.status > .vsep { margin: 0 8px 0 11px; height: 14px; }
.msg { color: #2b3347; }
.views { margin-left: auto; display: flex; align-items: center; }
.views button { width: 24px; height: 23px; }
.views .wide { width: 34px; margin: 0 9px 0 12px; justify-content: flex-start; gap: 2px; }
.views .vsep { margin: 0 8px 0 0; }
.views .on { background: #cfcbc9; border-radius: 4px; }
.views .on + button { margin: 0 8px; }
.views .on ~ .vsep { margin: 0 15px 0 8px; }
.views .pct { width: auto; gap: 10px; font-size: 13px; }
.minus { margin-left: 10px; }
.minus i { width: 11px; height: 2px; background: #333; }
input[type="range"] { appearance: none; width: 140px; height: 16px; margin-left: 8px; background: linear-gradient(90deg, #2453e0 50%, #b5b1af 50%) center / 100% 2px no-repeat; }
input[type="range"]::-webkit-slider-thumb { appearance: none; width: 10px; height: 10px; border-radius: 50%; background: #777; border: 3px solid #fff; box-shadow: 0 0 2px #777; }

/* floating input indicator and site mark */
.ime { position: fixed; right: 3px; bottom: 4px; width: 60px; height: 26px; display: flex; align-items: center; justify-content: center; gap: 3px; background: #fff; border-radius: 5px; box-shadow: 0 0 3px 1px #555; color: #222; }
.ime svg { fill: none; stroke: #222; }
.mark { position: fixed; right: 12px; bottom: 9px; display: flex; align-items: flex-start; opacity: .8; pointer-events: none; }
.mark div { display: flex; flex-direction: column; }
.mark strong { font-size: 21px; line-height: 24px; color: #3f83c8; }
.mark span { font: 700 16px/18px "Liberation Sans", sans-serif; color: #5bb568; }
```
